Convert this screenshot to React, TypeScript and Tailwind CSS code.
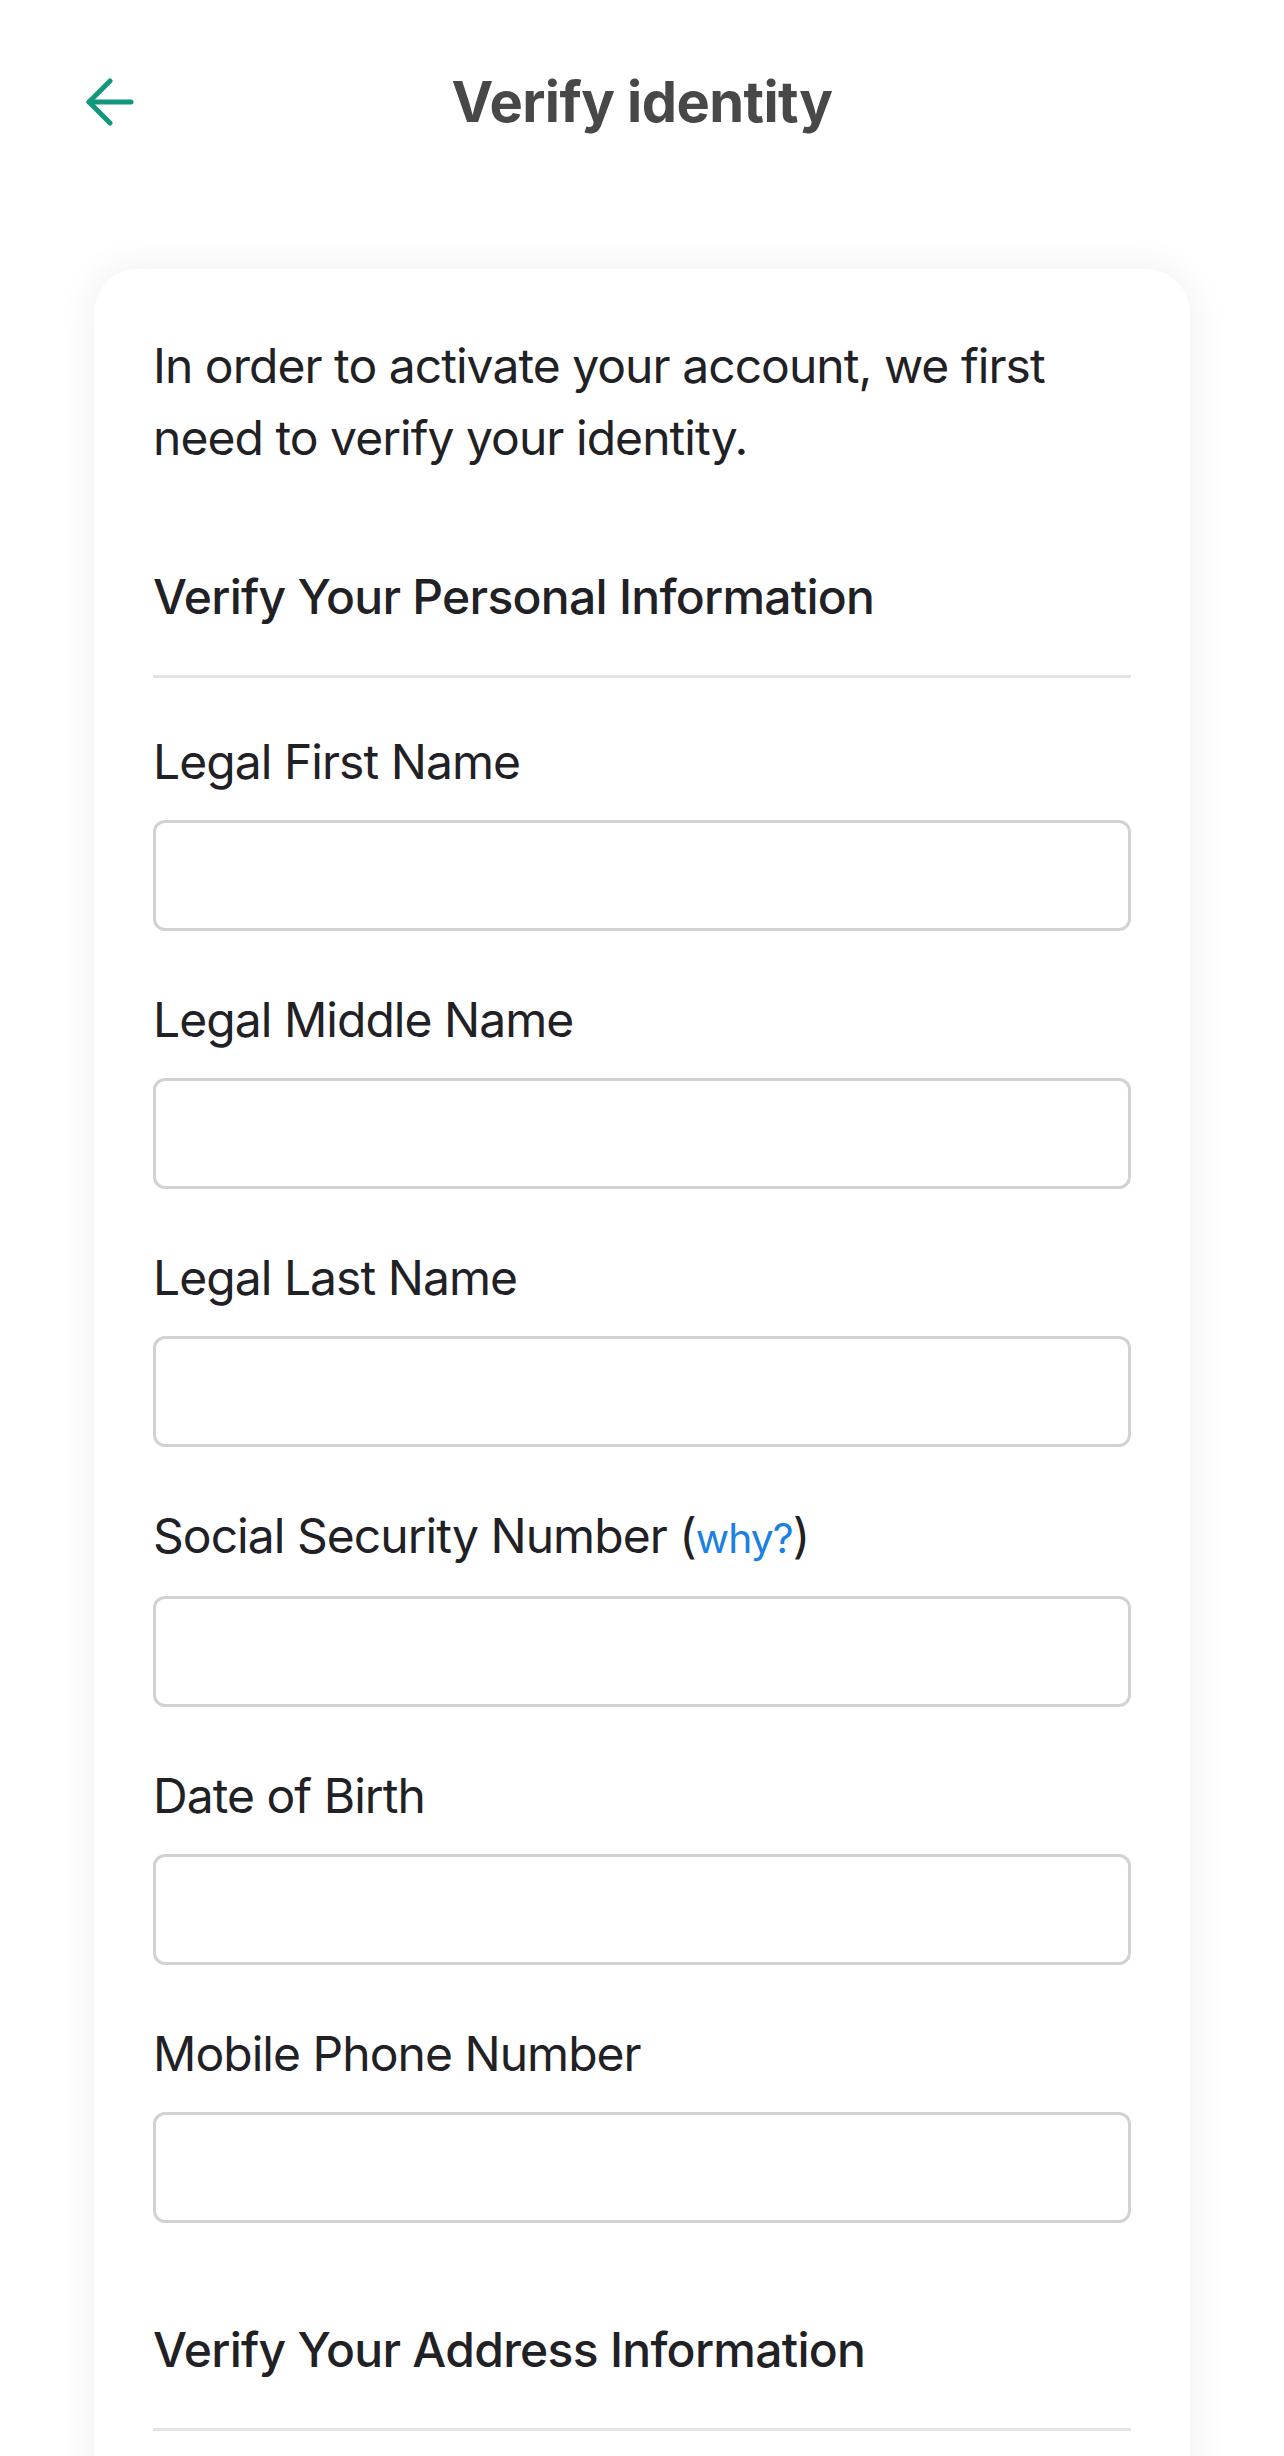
import React from "react";

/* FIELD */
type FieldProps = {
  label: React.ReactNode;
};

const Field: React.FC<FieldProps> = ({ label }) => {
  return (
    <div className="flex flex-col pb-[53px]">
      <label className="text-[48px] leading-[72px] text-[#1f2125] tracking-[-0.02em]">
        {label}
      </label>
      <input
        type="text"
        className="mt-[22px] h-[111px] w-full rounded-[12px] border-[3px] border-[#d0d2d5] bg-white outline-none"
      />
    </div>
  );
};

/* SECTION TITLE */
const SectionTitle = ({ children }: { children: React.ReactNode }) => (
  <div className="flex flex-col">
    <h2 className="text-[48px] leading-[72px] font-medium text-[#1f2125] tracking-[-0.015em]">
      {children}
    </h2>
    <div className="mt-[42px] h-[3px] w-full bg-[#e4e4e4]" />
  </div>
);

/* APP */
const App = () => {
  return (
    <div className="min-h-screen w-full bg-white overflow-hidden font-['Inter',sans-serif]">
      {/* Header */}
      <div className="grid h-[204px] grid-cols-[1fr_auto_1fr] items-center">
        <div className="pl-[85px]">
          <button className="flex items-center">
            <svg
              width="50"
              height="48"
              viewBox="0 0 50 48"
              fill="none"
              stroke="#13977b"
              strokeWidth="5"
              strokeLinecap="round"
              strokeLinejoin="round">
              <path d="M46 24H4" />
              <path d="M25 3L4 24L25 45" />
            </svg>
          </button>
        </div>
        <h1 className="text-[56px] font-bold text-[#484848] tracking-[-0.01em]">
          Verify identity
        </h1>
        <div />
      </div>

      {/* Card */}
      <div className="mx-[94px] mt-[65px] rounded-[44px] bg-white px-[59px] pt-[61px] pb-[160px] shadow-[0_0_40px_rgba(0,0,0,0.07)]">
        <p className="text-[48px] leading-[72px] text-[#1f2125] tracking-[-0.02em]">
          In order to activate your account, we first need to verify your
          identity.
        </p>

        <div className="mt-[87px]">
          <SectionTitle>Verify Your Personal Information</SectionTitle>
        </div>

        <div className="mt-[48px] flex flex-col">
          <Field label="Legal First Name" />
          <Field label="Legal Middle Name" />
          <Field label="Legal Last Name" />
          <Field
            label={
              <>
                Social Security Number (
                <a href="#" className="text-[0.85em] text-[#1a80e2]">
                  why?
                </a>
                )
              </>
            }
          />
          <Field label="Date of Birth" />
          <Field label="Mobile Phone Number" />
        </div>

        <div className="mt-[38px]">
          <SectionTitle>Verify Your Address Information</SectionTitle>
        </div>
      </div>
    </div>
  );
};

export default App;
